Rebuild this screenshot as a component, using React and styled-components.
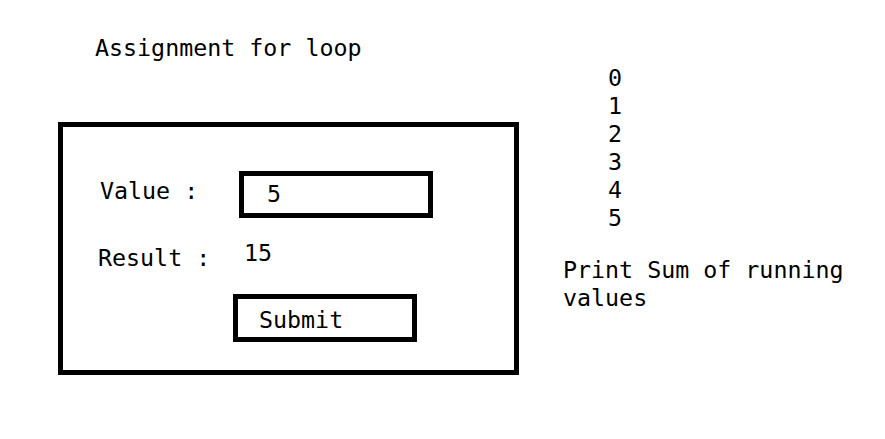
import React from "react";
import styled, { createGlobalStyle } from "styled-components";

const GlobalStyle = createGlobalStyle`
  html, body {
    margin: 0;
    padding: 0;
    background: #fff;
  }
  body {
    font-family: "DejaVu Sans Mono", "Liberation Mono", monospace;
    font-size: 23.3px;
    line-height: 28px;
    color: #000;
  }
`;

const Page = styled.div`
  display: flex;
  width: 885px;
  height: 439px;
`;

const LeftColumn = styled.div`
  display: flex;
  flex-direction: column;
  padding: 34px 0 0 58px;
  width: 461px;
`;

const Title = styled.div`
  margin-left: 37px;
`;

const Panel = styled.div`
  box-sizing: border-box;
  width: 461px;
  height: 253px;
  margin-top: 60px;
  border: 5px solid #000;
  padding: 44px 0 0 36px;
  display: flex;
  flex-direction: column;
`;

const Row = styled.div`
  display: flex;
  align-items: flex-start;
  margin-top: ${(p) => p.$top || 0}px;
`;

const Label = styled.div`
  width: ${(p) => p.$width}px;
  margin-top: ${(p) => p.$top || 0}px;
  margin-left: ${(p) => p.$left || 0}px;
  white-space: pre;
`;

const InputBox = styled.div`
  box-sizing: border-box;
  width: 194px;
  height: 47px;
  border: 5px solid #000;
  padding: 4px 0 0 23px;
`;

const Output = styled.div`
  padding-left: 2px;
`;

const Button = styled.div`
  box-sizing: border-box;
  width: 184px;
  height: 48px;
  margin-left: 134px;
  border: 5px solid #000;
  padding: 7px 0 0 21px;
`;

const RightColumn = styled.div`
  display: flex;
  flex-direction: column;
  padding: 64px 0 0 44px;
`;

const Numbers = styled.div`
  display: flex;
  flex-direction: column;
  margin-left: 45px;
`;

const Note = styled.div`
  width: 300px;
  margin-top: 24px;
`;

const values = [0, 1, 2, 3, 4, 5];

const App = () => {
  return (
    <>
      <GlobalStyle />
      <Page>
        <LeftColumn>
          <Title>Assignment for loop</Title>
          <Panel>
            <Row>
              <Label $width={139} $top={6} $left={1}>
                Value :
              </Label>
              <InputBox>5</InputBox>
            </Row>
            <Row $top={21}>
              <Label $width={144} $top={5} $left={-1}>
                Result :
              </Label>
              <Output>15</Output>
            </Row>
            <Row $top={22}>
              <Button>Submit</Button>
            </Row>
          </Panel>
        </LeftColumn>
        <RightColumn>
          <Numbers>
            {values.map((v) => (
              <div key={v}>{v}</div>
            ))}
          </Numbers>
          <Note>Print Sum of running values</Note>
        </RightColumn>
      </Page>
    </>
  );
};

export default App;
